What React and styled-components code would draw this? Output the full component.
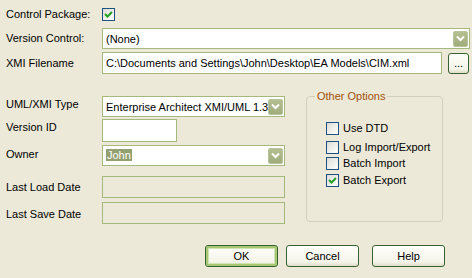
import React from "react";
import styled, { createGlobalStyle } from "styled-components";

const GlobalStyle = createGlobalStyle`
  html, body {
    margin: 0;
    padding: 0;
    background: #ece9d8;
  }
  body {
    font-family: "Liberation Sans", Arial, sans-serif;
    font-size: 11px;
    color: #000;
  }
`;

const Dialog = styled.div`
  width: 472px;
  height: 278px;
  background: #ece9d8;
  padding-top: 8px;
  box-sizing: border-box;
  position: relative;
`;

const Row = styled.div`
  display: flex;
  align-items: ${({ $align }) => $align || "center"};
  margin-top: ${({ $mt }) => $mt || 0}px;
  padding-left: 6px;
`;

const Label = styled.div`
  width: 96px;
  flex: none;
  white-space: nowrap;
  padding-top: ${({ $pt }) => $pt || 0}px;
  line-height: 13px;
`;

const Field = styled.div`
  box-sizing: border-box;
  width: ${({ $w }) => $w}px;
  height: ${({ $h }) => $h || 22}px;
  border: 1px solid #a5b97f;
  background: ${({ $disabled }) => ($disabled ? "#ece9d8" : "#fff")};
  display: flex;
  align-items: center;
  padding-left: 3px;
  white-space: nowrap;
  overflow: hidden;
  position: relative;
`;

const FieldText = styled.span`
  flex: 1;
  overflow: hidden;
  white-space: nowrap;
`;

const Selected = styled.span`
  background: #93a070;
  color: #fff;
  padding: 0 1px;
  line-height: 13px;
`;

const DropButton = styled.div`
  flex: none;
  width: 15px;
  height: 16px;
  margin-right: 1px;
  box-sizing: border-box;
  border: 1px solid #b9c39b;
  border-radius: 2px;
  background: linear-gradient(#b4c08f, #9fac7c);
  display: flex;
  align-items: center;
  justify-content: center;
`;

const Box = styled.div`
  box-sizing: border-box;
  width: 13px;
  height: 13px;
  flex: none;
  border: 1px solid #1c5180;
  background: linear-gradient(135deg, #dcdcd7 0%, #f5f5f2 70%, #fff 100%);
  display: flex;
  align-items: center;
  justify-content: center;
`;

const Check = ({ checked }) => (
  <Box>
    {checked && (
      <svg width="9" height="9" viewBox="0 0 9 9">
        <path d="M1 4 L3.5 6.5 L8 2" stroke="#21a121" strokeWidth="2" fill="none" />
      </svg>
    )}
  </Box>
);

const Combo = ({ w, h, children }) => (
  <Field $w={w} $h={h}>
    <FieldText>{children}</FieldText>
    <DropButton>
      <svg width="9" height="7" viewBox="0 0 9 7">
        <path d="M1 1.5 L4.5 5 L8 1.5" stroke="#fff" strokeWidth="2" fill="none" />
      </svg>
    </DropButton>
  </Field>
);

const Button = styled.div`
  box-sizing: border-box;
  width: ${({ $w }) => $w || 73}px;
  height: ${({ $h }) => $h || 22}px;
  margin-left: ${({ $ml }) => $ml || 0}px;
  border: 1px solid #37612e;
  border-radius: 3px;
  background: linear-gradient(#fffffb, #f5f4ea 80%, #dedcc9);
  display: flex;
  align-items: center;
  justify-content: center;
  box-shadow: ${({ $default }) =>
    $default ? "inset 0 0 0 2px #a6c873, inset 0 0 0 3px #d1e2b3" : "none"};
  flex: none;
`;

const Lower = styled.div`
  display: flex;
  margin-top: 22px;
`;

const LeftCol = styled.div`
  width: 306px;
`;

const Group = styled.fieldset`
  margin: -6px 0 0 0;
  padding: 0 0 0 19px;
  width: 137px;
  height: 132px;
  box-sizing: border-box;
  border: 1px solid #d0d0bf;
  border-radius: 4px;
`;

const Legend = styled.legend`
  color: #a0500a;
  padding: 0 2px;
  margin-left: -11px;
  line-height: 13px;
`;

const OptionList = styled.div`
  display: flex;
  flex-direction: column;
  padding-top: 19px;
`;

const Option = styled.div`
  display: flex;
  align-items: center;
  gap: 4px;
  margin-top: ${({ $mt }) => $mt || 0}px;
  line-height: 13px;
`;

const Footer = styled.div`
  display: flex;
  padding-left: 205px;
  margin-top: 21px;
`;

export default function App() {
  return (
    <>
      <GlobalStyle />
      <Dialog>
        <Row>
          <Label>Control Package:</Label>
          <Check checked />
        </Row>
        <Row $mt={7}>
          <Label>Version Control:</Label>
          <Combo w={368} h={21}>(None)</Combo>
        </Row>
        <Row $mt={3}>
          <Label>XMI Filename</Label>
          <Field $w={340} $h={22}>
            <FieldText>C:\Documents and Settings\John\Desktop\EA Models\CIM.xml</FieldText>
          </Field>
          <Button $w={21} $h={21} $ml={6}>...</Button>
        </Row>
        <Lower>
          <LeftCol>
            <Row $align="flex-start">
              <Label $pt={2}>UML/XMI Type</Label>
              <Combo w={183} h={21}>Enterprise Architect XMI/UML 1.3</Combo>
            </Row>
            <Row $align="flex-start" $mt={2}>
              <Label $pt={2}>Version ID</Label>
              <Field $w={75} $h={23} />
            </Row>
            <Row $align="flex-start" $mt={3}>
              <Label $pt={3}>Owner</Label>
              <Combo w={183} h={21}>
                <Selected>John</Selected>
              </Combo>
            </Row>
            <Row $mt={10}>
              <Label>Last Load Date</Label>
              <Field $w={183} $h={22} $disabled />
            </Row>
            <Row $mt={4}>
              <Label $pt={3}>Last Save Date</Label>
              <Field $w={183} $h={22} $disabled />
            </Row>
          </LeftCol>
          <Group>
            <Legend>Other Options</Legend>
            <OptionList>
              <Option>
                <Check />
                <span>Use DTD</span>
              </Option>
              <Option $mt={6}>
                <Check />
                <span>Log Import/Export</span>
              </Option>
              <Option $mt={3}>
                <Check />
                <span>Batch Import</span>
              </Option>
              <Option $mt={4}>
                <Check checked />
                <span>Batch Export</span>
              </Option>
            </OptionList>
          </Group>
        </Lower>
        <Footer>
          <Button $default>OK</Button>
          <Button $ml={8}>Cancel</Button>
          <Button $ml={13}>Help</Button>
        </Footer>
      </Dialog>
    </>
  );
}
